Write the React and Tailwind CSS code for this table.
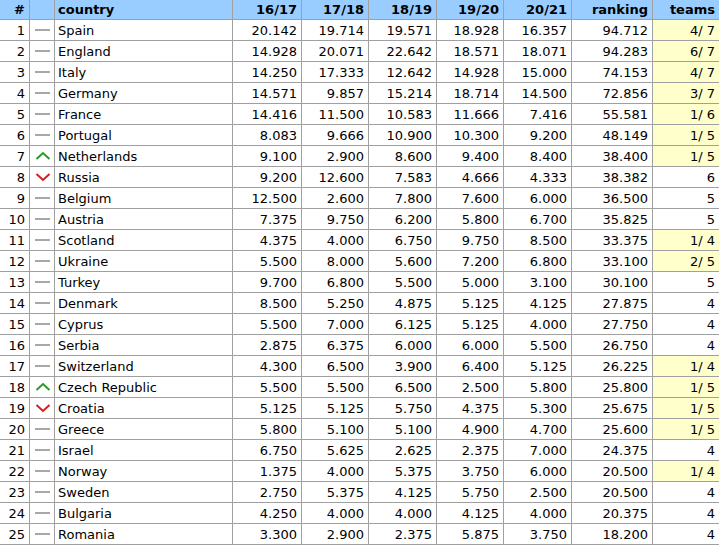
import React from "react";

const rows = [
  [1, "s", "Spain", "20.142", "19.714", "19.571", "18.928", "16.357", "94.712", "4/ 7", true],
  [2, "s", "England", "14.928", "20.071", "22.642", "18.571", "18.071", "94.283", "6/ 7", true],
  [3, "s", "Italy", "14.250", "17.333", "12.642", "14.928", "15.000", "74.153", "4/ 7", true],
  [4, "s", "Germany", "14.571", "9.857", "15.214", "18.714", "14.500", "72.856", "3/ 7", true],
  [5, "s", "France", "14.416", "11.500", "10.583", "11.666", "7.416", "55.581", "1/ 6", true],
  [6, "s", "Portugal", "8.083", "9.666", "10.900", "10.300", "9.200", "48.149", "1/ 5", true],
  [7, "u", "Netherlands", "9.100", "2.900", "8.600", "9.400", "8.400", "38.400", "1/ 5", true],
  [8, "d", "Russia", "9.200", "12.600", "7.583", "4.666", "4.333", "38.382", "6", false],
  [9, "s", "Belgium", "12.500", "2.600", "7.800", "7.600", "6.000", "36.500", "5", false],
  [10, "s", "Austria", "7.375", "9.750", "6.200", "5.800", "6.700", "35.825", "5", false],
  [11, "s", "Scotland", "4.375", "4.000", "6.750", "9.750", "8.500", "33.375", "1/ 4", true],
  [12, "s", "Ukraine", "5.500", "8.000", "5.600", "7.200", "6.800", "33.100", "2/ 5", true],
  [13, "s", "Turkey", "9.700", "6.800", "5.500", "5.000", "3.100", "30.100", "5", false],
  [14, "s", "Denmark", "8.500", "5.250", "4.875", "5.125", "4.125", "27.875", "4", false],
  [15, "s", "Cyprus", "5.500", "7.000", "6.125", "5.125", "4.000", "27.750", "4", false],
  [16, "s", "Serbia", "2.875", "6.375", "6.000", "6.000", "5.500", "26.750", "4", false],
  [17, "s", "Switzerland", "4.300", "6.500", "3.900", "6.400", "5.125", "26.225", "1/ 4", true],
  [18, "u", "Czech Republic", "5.500", "5.500", "6.500", "2.500", "5.800", "25.800", "1/ 5", true],
  [19, "d", "Croatia", "5.125", "5.125", "5.750", "4.375", "5.300", "25.675", "1/ 5", true],
  [20, "s", "Greece", "5.800", "5.100", "5.100", "4.900", "4.700", "25.600", "1/ 5", true],
  [21, "s", "Israel", "6.750", "5.625", "2.625", "2.375", "7.000", "24.375", "4", false],
  [22, "s", "Norway", "1.375", "4.000", "5.375", "3.750", "6.000", "20.500", "1/ 4", true],
  [23, "s", "Sweden", "2.750", "5.375", "4.125", "5.750", "2.500", "20.500", "4", false],
  [24, "s", "Bulgaria", "4.250", "4.000", "4.000", "4.125", "4.000", "20.375", "4", false],
  [25, "s", "Romania", "3.300", "2.900", "2.375", "5.875", "3.750", "18.200", "4", false],
];

const cols = "grid-cols-[30px_25px_178px_69px_67px_68px_67px_68px_81px_68px]";

function Trend({ t }) {
  if (t === "u")
    return (
      <svg width="16" height="10" viewBox="0 0 16 10">
        <polyline points="1.5,8 8,2 14.5,8" fill="none" stroke="#2a9a2a" strokeWidth="2" />
      </svg>
    );
  if (t === "d")
    return (
      <svg width="16" height="10" viewBox="0 0 16 10">
        <polyline points="1.5,2 8,8 14.5,2" fill="none" stroke="#d42020" strokeWidth="2" />
      </svg>
    );
  return <div className="w-[15px] h-[2px] bg-[#a8a8a8]" />;
}

export default function App() {
  const cell = "border-r border-b border-[#a0a0a0] flex items-center";
  return (
    <div className="w-[719px] h-[545px] overflow-hidden bg-white text-[13px] text-black" style={{ fontFamily: "'DejaVu Sans', Verdana, sans-serif" }}>
      <div className={`grid ${cols} w-[721px]`}>
        {["#", "", "country", "16/17", "17/18", "18/19", "19/20", "20/21", "ranking", "teams"].map((h, i) => (
          <div
            key={i}
            className={`${cell} h-[20px] bg-[#99ccff] font-bold ${i === 2 ? "justify-start pl-[3px]" : i === 9 ? "justify-end pr-[5px]" : "justify-end pr-[4px]"}`}
          >
            {h}
          </div>
        ))}
        {rows.map((r) => (
          <React.Fragment key={r[0]}>
            <div className={`${cell} h-[21px] justify-end pr-[4px] pt-[2px]`}>{r[0]}</div>
            <div className={`${cell} h-[21px] justify-center pl-[1px]`}>
              <Trend t={r[1]} />
            </div>
            <div className={`${cell} h-[21px] pl-[3px] pt-[2px]`}>{r[2]}</div>
            {r.slice(3, 9).map((v, j) => (
              <div key={j} className={`${cell} h-[21px] justify-end pr-[4px] pt-[2px]`}>{v}</div>
            ))}
            <div className={`${cell} h-[21px] justify-end pr-[5px] pt-[2px] ${r[10] ? "bg-[#ffffcc]" : ""}`}>{r[9]}</div>
          </React.Fragment>
        ))}
      </div>
    </div>
  );
}
